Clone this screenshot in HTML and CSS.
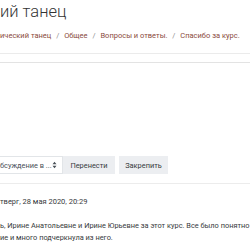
FILE: index.html
```
<!DOCTYPE html>
<html lang="ru">
<head>
    <meta charset="UTF-8">
    <meta name="viewport" content="width=device-width, initial-scale=1.0">
    <title>Спасибо за курс.</title>
    <link rel="stylesheet" href="styles.css">
</head>
<body>

    <!-- ШАПКА КУРСА -->
    <header class="page-head">
        <h1 class="title">ий танец</h1>
        <nav class="crumbs">
            <a href="#">ический танец</a>
            <span class="sep">/</span>
            <a href="#">Общее</a>
            <span class="sep">/</span>
            <a href="#">Вопросы и ответы.</a>
            <span class="sep">/</span>
            <a href="#">Спасибо за курс.</a>
        </nav>
    </header>

    <div class="band"></div>

    <!-- ПЕРЕНОС / ЗАКРЕПЛЕНИЕ -->
    <div class="tools">
        <div class="select">
            <span>бсуждение в ...</span>
            <svg class="caret" width="5" height="8" viewBox="0 0 5 8">
                <path d="M0.5 3.2 L2.5 0.8 L4.5 3.2 Z M0.5 4.8 L2.5 7.2 L4.5 4.8 Z" fill="#495057"/>
            </svg>
        </div>
        <button class="btn">Перенести</button>
        <button class="btn btn-pin">Закрепить</button>
    </div>

    <!-- СООБЩЕНИЕ -->
    <article class="post">
        <div class="post-date">тверг, 28 мая 2020, 20:29</div>
        <p class="post-text">ь, Ирине Анатольевне и Ирине Юрьевне за этот курс. Все было понятно б</p>
        <p class="post-text">ие и много подчеркнула из него.</p>
    </article>

</body>
</html>
```

FILE: styles.css
```
* {
    margin: 0;
    padding: 0;
    box-sizing: border-box;
}

body {
    width: 250px;
    height: 250px;
    overflow: hidden;
    background: #fff;
    font-family: Roboto, 'Open Sans', sans-serif;
    color: #373a3c;
}

.page-head {
    padding-top: 1px;
}

.title {
    font-size: 16.5px;
    font-weight: 300;
    line-height: 22px;
    color: #333;
    white-space: nowrap;
}

.crumbs {
    margin-top: 7px;
    font-size: 7.5px;
    line-height: 12px;
    white-space: nowrap;
}

.crumbs a {
    color: #8a4a3c;
    text-decoration: none;
}

.crumbs .sep {
    color: #8e8e8e;
    margin: 0 3px;
}

.band {
    margin-top: 11px;
    height: 10px;
    border-top: 1px solid #ebebeb;
    border-bottom: 1px solid #e3e3e3;
}

.tools {
    margin-top: 93px;
    display: flex;
    align-items: center;
    height: 18px;
}

.select {
    width: 63px;
    height: 18px;
    display: flex;
    align-items: center;
    justify-content: space-between;
    padding-right: 5px;
    background: #fff;
    border: 1px solid #e2e5e8;
    border-left: none;
    font-size: 7.4px;
    color: #495057;
    white-space: nowrap;
}

.btn {
    height: 18px;
    width: 52px;
    border: none;
    background: #eceef1;
    color: #373a3c;
    font-family: Roboto, 'Open Sans', sans-serif;
    font-size: 7.4px;
}

.btn-pin {
    width: 49px;
    margin-left: 4px;
}

.post {
    margin-top: 9px;
    border-top: 1px solid #ececec;
}

.post-date {
    margin-top: 12px;
    font-size: 7.5px;
    line-height: 12px;
    color: #373a3c;
    white-space: nowrap;
}

.post-text {
    font-size: 7.4px;
    line-height: 12px;
    color: #373a3c;
    white-space: nowrap;
    overflow: hidden;
}

.post-date + .post-text {
    margin-top: 12px;
}
```
